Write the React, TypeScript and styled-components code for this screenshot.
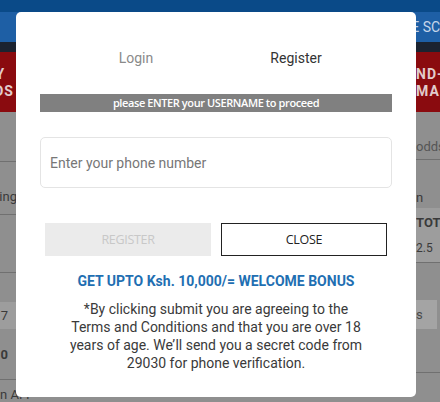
import React from "react";
import styled, { createGlobalStyle } from "styled-components";

const GlobalStyle = createGlobalStyle`
  html, body {
    margin: 0;
    padding: 0;
    background: #8f8f8f;
    overflow: hidden;
    font-family: Roboto, "Liberation Sans", sans-serif;
  }
`;

/* ---------- dimmed page behind the modal ---------- */

const Page = styled.div`
  width: 440px;
  height: 402px;
  overflow: hidden;
  display: flex;
  flex-direction: column;
`;

const TopBar = styled.div`
  height: 12px;
  background: #0a4a88;
`;

const NavBand = styled.div`
  height: 30px;
  background: #1e5fa5;
  display: flex;
  align-items: center;
  padding-left: 391px;
  color: #c6d6ea;
  font-size: 14px;
  white-space: nowrap;
`;

const DarkStrip = styled.div`
  height: 10px;
  background: #1b2330;
`;

const PromoBand = styled.div`
  height: 61px;
  background: #8a0b0f;
  display: flex;
  align-items: center;
  justify-content: space-between;
  color: #e2cccc;
  font-weight: 700;
  font-size: 14px;
  line-height: 17px;
  letter-spacing: 1px;
  padding-top: 2px;
  box-sizing: border-box;
`;

const EdgeLeft = styled.div`
  width: 14px;
  overflow: hidden;
  display: flex;
  justify-content: flex-end;
  text-align: center;
  white-space: nowrap;
`;

const EdgeRight = styled.div`
  width: 24px;
  overflow: hidden;
  white-space: nowrap;
`;

const Content = styled.div`
  flex: 1;
  display: flex;
  justify-content: space-between;
`;

const Column = styled.div<{ $w: number }>`
  width: ${(p) => p.$w}px;
  display: flex;
  flex-direction: column;
`;

const Row = styled.div<{ $h: number; $line?: boolean; $light?: boolean; $align?: string }>`
  height: ${(p) => p.$h}px;
  box-sizing: border-box;
  border-bottom: ${(p) => (p.$line ? "1px solid #707070" : "none")};
  background: ${(p) => (p.$light ? "#9d9d9d" : "transparent")};
  display: flex;
  flex-direction: column;
  justify-content: ${(p) => p.$align || "center"};
  color: #3a3a3a;
  font-size: 13px;
  white-space: nowrap;
  overflow: hidden;
`;

const Cell = styled.div<{ $bold?: boolean; $end?: number }>`
  display: flex;
  justify-content: ${(p) => (p.$end !== undefined ? "flex-end" : "flex-start")};
  padding-right: ${(p) => p.$end ?? 0}px;
  font-weight: ${(p) => (p.$bold ? 700 : 400)};
`;

const SmallBox = styled.div`
  width: 21px;
  height: 100%;
  background: #a4a4a4;
  display: flex;
  align-items: center;
  overflow: hidden;
  font-size: 13px;
  color: #4a4a4a;
`;

/* ---------- modal ---------- */

const Overlay = styled.div`
  position: fixed;
  inset: 0;
  display: flex;
  align-items: flex-start;
  padding: 12px 0 0 16px;
`;

const Modal = styled.div`
  width: 400px;
  height: 385px;
  box-sizing: border-box;
  background: #fff;
  border-radius: 5px;
  padding: 34px 24px 0;
  display: flex;
  flex-direction: column;
  align-items: stretch;
`;

const Tabs = styled.div`
  display: flex;
  justify-content: center;
  margin: 0 -24px;
`;

const Tab = styled.div<{ $active?: boolean }>`
  width: 160px;
  text-align: center;
  font-size: 14px;
  line-height: 24px;
  color: ${(p) => (p.$active ? "#333" : "#8a8a8a")};
`;

const Notice = styled.div`
  margin-top: 24px;
  height: 18px;
  background: #808080;
  color: #fff;
  font-family: "Open Sans", "Liberation Sans", sans-serif;
  font-weight: 600;
  font-size: 11px;
  letter-spacing: -0.4px;
  line-height: 18px;
  text-align: center;
`;

const PhoneInput = styled.input`
  margin-top: 25px;
  height: 51px;
  box-sizing: border-box;
  border: 1px solid #e4e4e4;
  border-radius: 5px;
  padding: 0 9px;
  font-family: Roboto, "Liberation Sans", sans-serif;
  font-size: 14px;
  color: #333;
  outline: none;
  &::placeholder {
    color: #777;
  }
`;

const Buttons = styled.div`
  margin-top: 35px;
  padding: 0 5px;
  display: grid;
  grid-template-columns: 1fr 1fr;
  gap: 10px;
`;

const Button = styled.button<{ $variant: "disabled" | "outline" }>`
  height: 33px;
  box-sizing: border-box;
  font-family: "Open Sans", "Liberation Sans", sans-serif;
  font-size: 12.5px;
  letter-spacing: -0.3px;
  border-radius: 0;
  background: ${(p) => (p.$variant === "disabled" ? "#ebebeb" : "#fff")};
  color: ${(p) => (p.$variant === "disabled" ? "#c8c8c8" : "#222")};
  border: ${(p) => (p.$variant === "disabled" ? "none" : "1px solid #222")};
`;

const Bonus = styled.div`
  margin-top: 16px;
  text-align: center;
  color: #1f6fb2;
  font-weight: 700;
  font-size: 14px;
  line-height: 18px;
`;

const Terms = styled.p`
  margin: 10px auto 0;
  width: 300px;
  text-align: center;
  color: #3a3a3a;
  font-size: 14px;
  line-height: 18px;
`;

export default function App() {
  return (
    <>
      <GlobalStyle />
      <Page>
        <TopBar />
        <NavBand>LIVE SCORES</NavBand>
        <DarkStrip />
        <PromoBand>
          <EdgeLeft>
            <div>
              MY
              <br />
              ODDS
            </div>
          </EdgeLeft>
          <EdgeRight>
            ND-
            <br />
            MAR
          </EdgeRight>
        </PromoBand>
        <Content>
          <Column $w={40}>
            <Row $h={50} $line />
            <Row $h={53} $line $align="flex-end">
              <Cell $end={23} style={{ paddingBottom: 10 }}>
                Upcoming
              </Cell>
            </Row>
            <Row $h={58} $line />
            <Row $h={29} />
            <Row $h={27} $light>
              <Cell $end={32}>17</Cell>
            </Row>
            <Row $h={51} $line>
              <Cell $end={32} $bold>
                10
              </Cell>
            </Row>
            <Row $h={22} $align="flex-end">
              <Cell>n AFI</Cell>
            </Row>
          </Column>
          <Column $w={24}>
            <Row $h={48} $line $align="flex-end">
              <Cell style={{ paddingBottom: 5, color: "#555" }}>odds</Cell>
            </Row>
            <Row $h={48} $align="flex-end">
              <Cell style={{ paddingBottom: 3 }}>n</Cell>
            </Row>
            <Row $h={55} $line $light>
              <Cell $bold>TOT</Cell>
              <Cell style={{ marginTop: 11, fontSize: 12 }}>2.5</Cell>
            </Row>
            <Row $h={37} />
            <Row $h={29}>
              <SmallBox>s</SmallBox>
            </Row>
            <Row $h={44} $line />
          </Column>
        </Content>
      </Page>
      <Overlay>
        <Modal>
          <Tabs>
            <Tab>Login</Tab>
            <Tab $active>Register</Tab>
          </Tabs>
          <Notice>please ENTER your USERNAME to proceed</Notice>
          <PhoneInput placeholder="Enter your phone number" />
          <Buttons>
            <Button $variant="disabled">REGISTER</Button>
            <Button $variant="outline">CLOSE</Button>
          </Buttons>
          <Bonus>GET UPTO Ksh. 10,000/= WELCOME BONUS</Bonus>
          <Terms>
            *By clicking submit you are agreeing to the Terms and Conditions and
            that you are over 18 years of age. We’ll send you a secret code from
            29030 for phone verification.
          </Terms>
        </Modal>
      </Overlay>
    </>
  );
}
